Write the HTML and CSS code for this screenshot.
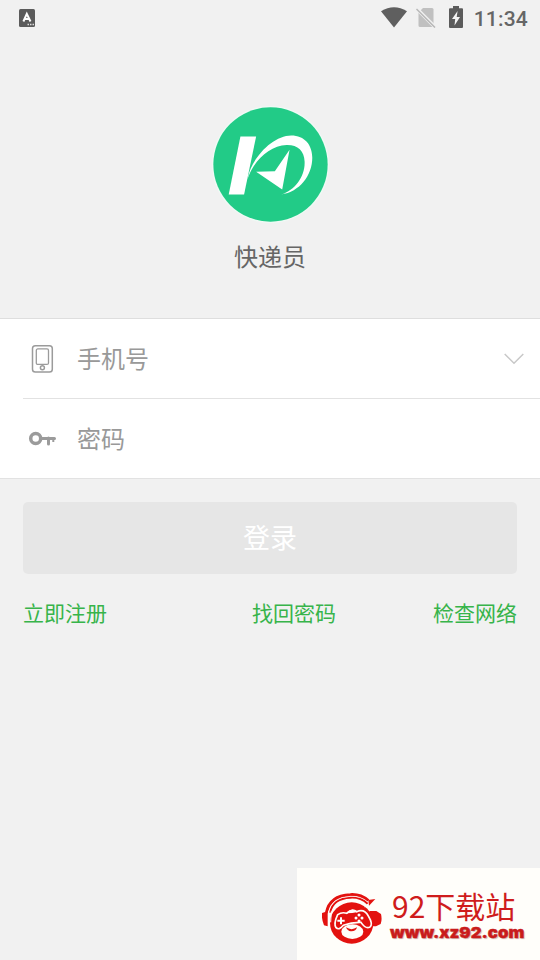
FILE: index.html
```html
<!DOCTYPE html>
<html lang="zh-CN">
<head>
<meta charset="utf-8">
<title>快递员</title>
<link rel="stylesheet" href="styles.css">
</head>
<body>
<header class="status">
  <svg class="ime" viewBox="0 0 16 18"><rect width="16" height="18" rx="1.5" fill="#5b5b5b"/><path d="M4.400 12.500 7.800 4.800 11.500 12.500M5.800 10h4.400" fill="none" stroke="#fff" stroke-width="2"/><path d="M8.500 15.500h1.500m1 0h1.500m1 0h1.500" stroke="#ddd" stroke-width="1.300"/></svg>
  <svg class="wifi" viewBox="0 0 26 21"><path d="M0 4.300Q13-4 26 4.300L13 20.500Z" fill="#5f5f5f"/></svg>
  <svg class="sim" viewBox="0 0 20 20"><path d="M7 0h9q1.500 0 1.500 1.500V18q0 1-1 1H4q-1.500 0-1.500-1.500V4.500Z" fill="#c0c0c0"/><path d="M.5.5 19 19" stroke="#f1f1f1" stroke-width="3.600"/><path d="M.5 1 19 19.500" stroke="#b6b6b6" stroke-width="1.500"/></svg>
  <svg class="battery" viewBox="0 0 14 22"><path d="M4 0h6v2.300h3q1 0 1 1V21q0 1-1 1H1q-1 0-1-1V3.300q0-1 1-1h3Z" fill="#5b5b5b"/><path d="M8.600 5 3 13h3.200L5.500 19.500 11 11H7.700Z" fill="#f4f4f4"/></svg>
  <span class="clock">11:34</span>
</header>
<main>
  <section class="brand">
    <svg class="logo" viewBox="33 32 356 356">
      <circle cx="211" cy="210" r="175" fill="#effaf5"/>
      <circle cx="211" cy="210" r="171" fill="#22cb87"/>
      <path d="M121 126H168L132 300H86Z" fill="#fff"/>
      <path d="M142 254C154 190 217 124 273 123C313 123 336 151 336 190C336 243 298 292 243 300C285 286 315 245 313 201C312 169 292 151 259 152C210 154 164 196 146 244Z" fill="#fff"/>
      <path d="M268 166 246 285 168 232 224 230Z" fill="#fff"/>
    </svg>
    <h1>快递员</h1>
  </section>
  <form class="fields">
    <label class="field">
      <svg class="icon" viewBox="0 0 28 28" fill="none" stroke="#9b9b9b"><rect x="4.500" y=".8" width="19.800" height="26.200" rx="2.800" stroke-width="1.500"/><rect x="8.300" y="3.900" width="12.200" height="15.500" rx="1.500" stroke-width="1.300"/><circle cx="14.400" cy="22.800" r="2" stroke-width="1.500"/></svg>
      <span>手机号</span>
      <svg class="arrow" viewBox="0 0 20 12"><path d="M.7 1 10 10.300 19.300 1" fill="none" stroke="#c8c8c8" stroke-width="1.500"/></svg>
    </label>
    <label class="field">
      <svg class="icon" viewBox="0 0 28 28" fill="none" stroke="#9b9b9b"><circle cx="7.700" cy="13.500" r="5" stroke-width="3.500"/><path d="M13 13.500H26.500M20.500 13v6" stroke-width="3" stroke-linecap="round"/><path d="M25.300 13v4" stroke-width="2"/></svg>
      <span>密码</span>
    </label>
  </form>
  <button class="login">登录</button>
  <nav class="links"><a>立即注册</a><a>找回密码</a><a>检查网络</a></nav>
</main>
<aside class="watermark">
  <svg class="mascot" viewBox="19 19 180 156">
    <g fill="#e3120f">
      <path d="M19 82 36 77V122L25 119Q17 100 19 82ZM162 76H182L196 85Q200 102 195 115L181 122H162Z"/>
      <ellipse cx="108" cy="112" rx="65" ry="62"/>
    </g>
    <path d="M47 80Q57 45 105 42Q139 40 157 62" fill="none" stroke="#fffefa" stroke-width="5"/>
    <path d="M32 82Q42 29 104 27Q135 25 158 45" fill="none" stroke="#e3120f" stroke-width="9"/>
    <path d="M43 81Q52 38 104 36Q134 34 156 54" fill="none" stroke="#e3120f" stroke-width="6"/>
    <path d="M38 80Q48 34 104 32Q134 30 157 49" fill="none" stroke="#fffefa" stroke-width="2"/>
    <path d="M39 76V119M47 77 45 110" stroke="#fffefa" stroke-width="3"/>
    <path d="M145 65 174 39 155 80 162 61Z" fill="#fffefa"/>
    <path d="M158 43 179 40 160 60Z" fill="#e3120f"/>
    <ellipse cx="110" cy="138" rx="33" ry="22" fill="#fffefa"/>
    <path d="M66 87Q79 78 93 83Q109 66 123 78Q146 68 158 91Q174 117 162 125Q149 130 136 110Q109 109 83 119Q70 135 61 126Q53 115 66 87Z" fill="#e3120f" stroke="#fffefa" stroke-width="5"/>
    <path d="M91 83Q107 63 127 79Q111 83 91 83Z" fill="#fffefa"/>
    <path d="M65 105H87M76 95V116" stroke="#fff" stroke-width="6"/>
    <g fill="#fff"><circle cx="130" cy="88" r="4.500"/><circle cx="121" cy="97" r="4.500"/><circle cx="139" cy="97" r="4.500"/><circle cx="130" cy="106" r="4.500"/></g>
    <path d="M91 125Q108 136 124 125Q121 138 105 137Q96 136 91 125Z" fill="#e3120f"/>
  </svg>
  <div class="site"><strong>92下载站</strong><span>www.xz92.com</span></div>
</aside>
</body>
</html>
```

FILE: styles.css
```css
* { box-sizing: border-box; }
body {
  margin: 0;
  height: 960px;
  overflow: hidden;
  position: relative;
  background: #f1f1f1;
  font-family: "Noto Sans CJK SC", sans-serif;
}
svg { display: block; flex: none; }
.status { height: 36px; padding: 0 12px 0 19px; display: flex; align-items: center; }
.ime { width: 16px; height: 18px; margin-right: auto; }
.wifi { width: 26px; height: 21px; margin: 0 9px 2px 0; }
.sim { width: 20px; height: 20px; margin-right: 13px; }
.battery { width: 14px; height: 22px; margin: 0 11px 2px 0; }
.clock { font: 500 21px/36px Roboto, sans-serif; letter-spacing: .2px; color: #666; padding-top: 1px; }
.brand { height: 282px; padding-top: 69px; display: flex; flex-direction: column; align-items: center; }
.logo { width: 119px; height: 119px; }
h1 { margin: 14px 0 0; font-weight: 400; font-size: 24px; line-height: 36px; color: #666; }
.fields { height: 161px; background: #fff; border-top: 1px solid #dedede; border-bottom: 1px solid #e2e2e2; }
.field { height: 79px; margin-left: 23px; padding: 0 16px 0 5px; display: flex; align-items: center; font-size: 24px; line-height: 36px; color: #999; }
.field + .field { height: 80px; border-top: 1px solid #e2e2e2; }
.field span { padding-bottom: 1px; }
.icon { width: 28px; height: 28px; margin-right: 21px; }
.arrow { width: 20px; height: 12px; margin-left: auto; }
.login { display: block; width: 494px; height: 72px; margin: 23px 0 0 23px; padding: 0 0 2px; border: 0; border-radius: 5px; background: #e6e6e6; color: #fff; font: 400 27px/70px "Noto Sans CJK SC", sans-serif; }
.links { display: grid; grid-template-columns: 229px 181px 84px; margin: 22px 0 0 23px; font-size: 21px; line-height: 32px; color: #37b44a; }
.watermark { position: absolute; right: 0; bottom: 0; width: 243px; height: 92px; padding: 20px 0 0 25px; display: flex; background: #fffefa; }
.mascot { width: 60px; height: 52px; margin-top: 4px; }
.site { margin-left: 8px; display: flex; flex-direction: column; }
.site strong { margin-left: 2px; font-weight: 400; font-size: 30px; line-height: 35px; color: #cf1c1c; white-space: nowrap; }
.site span { font: 900 15px/20px Inter, sans-serif; color: #c91c1c; -webkit-text-stroke: .4px #c91c1c; text-shadow: 1px 1px 1px #ccb9b4; white-space: nowrap; transform: scaleX(1.12); transform-origin: left; }
```
